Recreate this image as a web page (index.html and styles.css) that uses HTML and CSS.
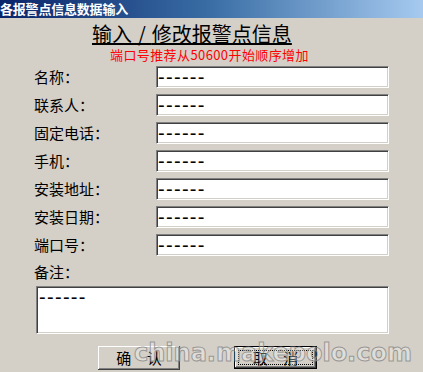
FILE: index.html
```html
<!DOCTYPE html>
<html lang="zh-CN">
<head>
<meta charset="utf-8">
<title>各报警点信息数据输入</title>
<link rel="stylesheet" href="styles.css">
</head>
<body>
<div class="window">
  <div class="titlebar">各报警点信息数据输入</div>
  <div class="heading">输<span class="wide">入/</span>修改报警点信息</div>
  <div class="hint">端口号推荐从50600开始顺序增加</div>
  <div class="form">
    <label class="lbl">名称：</label><input class="field" type="text" value="------">
    <label class="lbl">联系人：</label><input class="field" type="text" value="------">
    <label class="lbl">固定电话：</label><input class="field" type="text" value="------">
    <label class="lbl">手机：</label><input class="field" type="text" value="------">
    <label class="lbl">安装地址：</label><input class="field" type="text" value="------">
    <label class="lbl">安装日期：</label><input class="field" type="text" value="------">
    <label class="lbl">端口号：</label><input class="field" type="text" value="------">
  </div>
  <div class="note-label">备注：</div>
  <textarea class="note">------</textarea>
  <div class="buttons">
    <button class="btn">确 认</button>
    <button class="btn btn-default"><span class="focus">取 消</span></button>
  </div>
  <div class="watermark">china.makepolo.com</div>
</div>
</body>
</html>
```
FILE: styles.css
```css
html, body {
  margin: 0;
  padding: 0;
}
body {
  width: 423px;
  height: 372px;
  overflow: hidden;
  background: #d4d0c8;
  font-family: "Noto Sans CJK SC", "Liberation Sans", sans-serif;
  color: #000;
}
.window {
  position: relative;
  width: 423px;
  height: 372px;
  background: #d4d0c8;
}
.titlebar {
  height: 18px;
  line-height: 18px;
  background: linear-gradient(to right, #0a246a 0%, #3a6ea5 50%, #a6caf0 100%);
  color: #fff;
  font-size: 13px;
  font-weight: bold;
  letter-spacing: -0.2px;
  white-space: nowrap;
}
.heading {
  margin-top: 4px;
  padding-left: 92px;
  font-size: 20px;
  line-height: 24px;
  height: 24px;
  text-decoration: underline;
  text-underline-offset: 1px;
  white-space: nowrap;
}
.wide {
  letter-spacing: 6px;
}
.hint {
  margin-top: 1px;
  padding-left: 110px;
  font-size: 13px;
  line-height: 16px;
  height: 16px;
  letter-spacing: 0.4px;
  color: #ff0000;
  white-space: nowrap;
}
.form {
  margin-top: 3px;
  padding-left: 34px;
  display: grid;
  grid-template-columns: 122px 233px;
  row-gap: 6px;
}
.lbl {
  font-size: 15px;
  line-height: 22px;
  height: 22px;
  white-space: nowrap;
}
.field {
  box-sizing: border-box;
  width: 233px;
  height: 22px;
  margin: 0;
  padding: 0 1px;
  background: #fff;
  border: 1px solid;
  border-color: #808080 #ffffff #ffffff #808080;
  box-shadow: inset 1px 1px 0 #404040, inset -1px -1px 0 #d4d0c8;
  font-family: "Liberation Sans", sans-serif;
  font-size: 20px;
  letter-spacing: 1.3px;
  color: #000;
  outline: none;
}
.note-label {
  margin-top: 6px;
  padding-left: 34px;
  font-size: 15px;
  line-height: 20px;
  height: 20px;
}
.note {
  display: block;
  box-sizing: border-box;
  margin: 4px 0 0 36px;
  width: 353px;
  height: 48px;
  padding: 0 2px;
  resize: none;
  background: #fff;
  border: 1px solid;
  border-color: #808080 #ffffff #ffffff #808080;
  box-shadow: inset 1px 1px 0 #404040, inset -1px -1px 0 #d4d0c8;
  font-family: "Liberation Sans", sans-serif;
  font-size: 20px;
  letter-spacing: 1.3px;
  line-height: 20px;
  color: #000;
  outline: none;
  overflow: hidden;
}
.buttons {
  margin-top: 12px;
  padding-left: 98px;
  display: flex;
  gap: 54px;
}
.btn {
  box-sizing: border-box;
  width: 82px;
  height: 24px;
  margin: 0;
  padding: 0;
  background: #d4d0c8;
  border: none;
  box-shadow: inset -1px -1px 0 #404040, inset 1px 1px 0 #ffffff, inset -2px -2px 0 #808080, inset 2px 2px 0 #d4d0c8;
  font-family: "Noto Sans CJK SC", sans-serif;
  font-size: 15px;
  line-height: 20px;
  word-spacing: 12px;
  color: #000;
}
.btn-default {
  width: 83px;
  height: 23px;
  border: 1px solid #000;
  display: flex;
  padding: 3px;
}
.focus {
  flex: 1;
  border: 1px dotted #000;
  line-height: 13px;
  display: flex;
  align-items: center;
  justify-content: center;
}
.watermark {
  position: absolute;
  left: 134px;
  top: 340px;
  font-family: "DejaVu Sans", sans-serif;
  font-weight: bold;
  font-size: 24px;
  line-height: 26px;
  color: rgba(255, 255, 255, 0.3);
  -webkit-text-stroke: 1px rgba(130, 130, 130, 0.75);
  white-space: nowrap;
  pointer-events: none;
}
```
